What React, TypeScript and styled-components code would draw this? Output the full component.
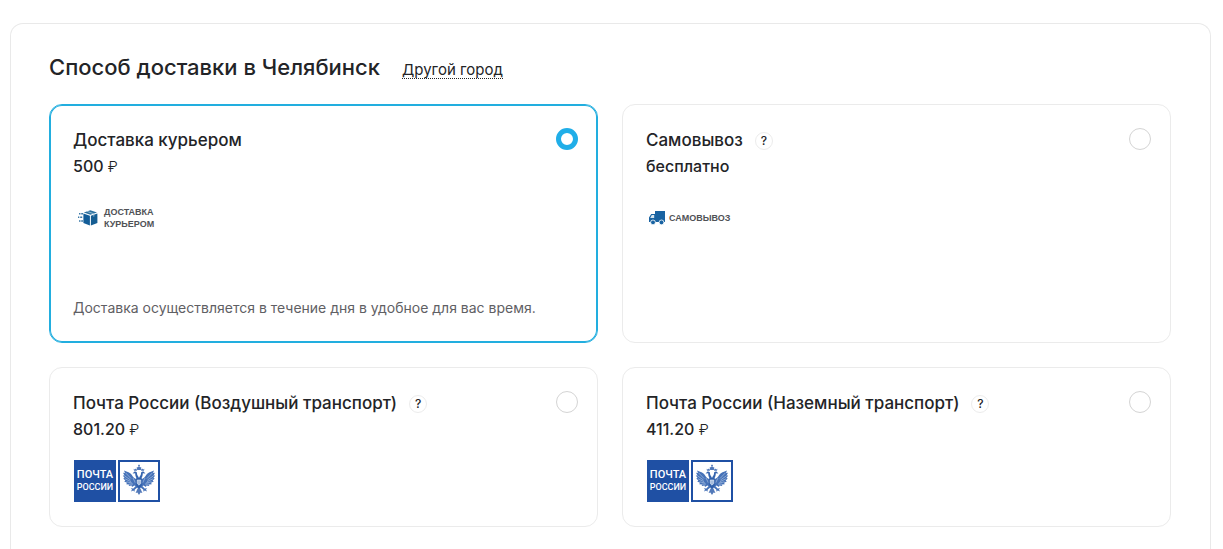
import React, { useState } from 'react';
import styled, { createGlobalStyle } from 'styled-components';

const GlobalStyle = createGlobalStyle`
  *, *::before, *::after { box-sizing: border-box; }
  body {
    margin: 0;
    background: #fff;
    color: #232427;
    font-family: Inter, 'Noto Sans', 'Liberation Sans', sans-serif;
  }
`;

const Page = styled.main`
  display: flex;
  flex-direction: column;
  min-height: 100vh;
  padding: 23px 12px 0 10px;
`;

const Panel = styled.section`
  flex: 1;
  padding: 29px 39px 20px 38px;
  border: 1px solid #e9e9e9;
  border-bottom: 0;
  border-radius: 13px 13px 0 0;
`;

const Header = styled.header`
  display: flex;
  align-items: baseline;
  gap: 22px;
  margin-bottom: 23px;
`;

const Title = styled.h2`
  margin: 0;
  font-size: 22px;
  line-height: 28px;
  font-weight: 500;
`;

const CityLink = styled.a`
  border-bottom: 1px dotted #232427;
  color: inherit;
  font-size: 15px;
  line-height: 16px;
  text-decoration: none;
`;

const Options = styled.div`
  display: grid;
  grid-template-columns: repeat(2, minmax(0, 1fr));
  gap: 24px;
`;

const Card = styled.article<{ $selected: boolean }>`
  padding: 22px 19px 24px 23px;
  border: 1px solid ${p => (p.$selected ? '#22aedf' : '#ebebeb')};
  border-radius: 13px;
  box-shadow: ${p => (p.$selected ? 'inset 0 0 0 1px #22aedf' : 'none')};
`;

const CardHead = styled.div`
  display: flex;
  align-items: flex-start;
  justify-content: space-between;
`;

const NameRow = styled.div`
  display: flex;
  align-items: center;
  gap: 12px;
`;

const Name = styled.label`
  font-size: 17px;
  line-height: 26px;
  font-weight: 500;
  cursor: pointer;
`;

const Hint = styled.button`
  width: 18px;
  height: 18px;
  margin-top: 2px;
  padding: 0;
  border: 1px solid #ececec;
  border-radius: 50%;
  background: #fff;
  color: #232427;
  font: 500 12px/16px Inter, sans-serif;
  cursor: pointer;
`;

const Price = styled.div`
  font-size: 16px;
  line-height: 26px;
  font-weight: 500;
`;

const Currency = styled.span`
  font-size: 15px;
  line-height: 16px;
  font-weight: 300;
`;

const Radio = styled.input`
  appearance: none;
  flex: none;
  width: 22px;
  height: 22px;
  margin: 1px 0 0;
  border: 1px solid #d4d4d4;
  border-radius: 50%;
  background: #fff;
  cursor: pointer;
  &:checked { border: 5px solid #20aee8; }
`;

const LogoBox = styled.div`
  display: flex;
  align-items: center;
  height: 42px;
  margin-top: 18px;
`;

const ServiceLogo = styled.div<{ $gap: number }>`
  display: flex;
  align-items: center;
  gap: ${p => p.$gap}px;
  padding-left: 3px;
  color: #505256;
  font: 700 9px/12px 'Liberation Sans', sans-serif;
`;

const PostLogo = styled.div`
  display: flex;
  gap: 2px;
  padding-left: 1px;
`;

const PostName = styled.div`
  display: flex;
  flex-direction: column;
  align-items: center;
  justify-content: center;
  width: 42px;
  height: 42px;
  background: #1f50a4;
  color: #fff;
  font: 500 11px/12px Roboto, 'Liberation Sans', sans-serif;
`;

const PostCountry = styled.span`
  font-size: 9px;
`;

const Description = styled.p`
  margin: 58px 0 0;
  color: #5f6064;
  font-size: 14px;
  line-height: 21px;
`;

const BoxIcon = () => (
  <svg width="22" height="18" viewBox="0 0 22 18" aria-hidden="true">
    <path d="M3 4.7h1.5M5.2 4.7H7M2 8.3h1.3M4.2 8.3h2M3 12h1.5M5.2 12H7" stroke="#3978a8" strokeWidth="1.4" />
    <path d="M7.8 3.6 14.4 1.2 21 3.6l-6.6 2.2z" fill="#2d719f" />
    <path d="M7.4 4.6 13.9 6.8V16.6L7.4 14z" fill="#125d98" />
    <path d="M21.4 4.6 14.9 6.8V16.6l6.5-2.6z" fill="#155d92" />
    <path d="m10.8 2.3 7 2.5v2.8" stroke="#a8c9de" strokeWidth=".8" fill="none" />
  </svg>
);

const TruckIcon = () => (
  <svg width="16" height="16" viewBox="0 0 16 16" aria-hidden="true">
    <path d="M6 1h10v11H0V7.5L2.2 4H6z" fill="#1963a2" />
    <path d="M2.8 5h2.4v3H1.2z" fill="#d6e6f1" />
    <circle cx="4" cy="12.4" r="2.4" fill="#1963a2" stroke="#fff" strokeWidth=".8" />
    <circle cx="12.5" cy="12.4" r="2.4" fill="#1963a2" stroke="#fff" strokeWidth=".8" />
  </svg>
);

const Wing = () => (
  <g>
    <path
      d="M18.5 19.5C15.5 19 14 17 12.5 14.5 11 12.3 8.5 12 5 10.5L6 13 4 12.8 5.5 15.4 3.8 15.6 5.6 18 4.2 18.6 6.4 20.6 5.2 21.6 8 22.8 7.2 24.2 10 24.4 9.8 26 12.6 25.4 13 27 15.4 25.6 18.5 27z"
      fill="#4672b8"
    />
    <path
      d="M6.5 12.8 12 18.5M5.5 15.8 11.5 20M6 18.8 12 21.6M7.5 21.8 13 23M10 24.2 14 24M14 18 16.5 23"
      stroke="#b9cce8"
      strokeWidth=".6"
      fill="none"
    />
    <path d="M20 18c-.6-2-2-2.6-2-4.6 0-1.6-1.4-2.4-2.8-1.6L13.6 13.4l2.6-.2c0 2.4.6 4.2 2.3 6.2z" fill="#3564ae" />
    <path d="M17.6 25 14.4 28.4 11.8 28.2 13 29.6 12 31.4 14.2 30.6 15.4 31.8 15.8 29.6 19 27z" fill="#4672b8" />
    <path d="m15 10.8-.4-2 1.2.6.8-1 .6 1 1-.4-.4 1.8z" fill="#5279b9" />
  </g>
);

const EagleIcon = () => (
  <svg width="42" height="42" viewBox="0 0 42 42" aria-hidden="true">
    <rect x="1" y="1" width="40" height="40" fill="#fff" stroke="#1f50a4" strokeWidth="2" />
    <g transform="translate(1 0)">
      <Wing />
      <g transform="matrix(-1 0 0 1 40 0)"><Wing /></g>
      <path d="M18.2 10 17.6 7.6 20 6.8 22.4 7.6 21.8 10z" fill="#5279b9" />
      <path d="M20 4.6V7M19 5.6h2" stroke="#4670b4" strokeWidth=".8" />
      <path d="M17.4 18h5.2l.8 4.5-1.4 4.5-2 3-2-3-1.4-4.5z" fill="#2f5faa" />
      <path d="M18.2 20h3.6v3.4L20 25.2l-1.8-1.8z" fill="#a8bfdf" stroke="#fff" strokeWidth=".5" />
      <path d="M18.6 28.5 16.6 33l1.8-.4L20 35l1.6-2.4 1.8.4-2-4.5z" fill="#5279b9" />
    </g>
  </svg>
);

const RussianPost = () => (
  <PostLogo>
    <PostName><span>ПОЧТА</span><PostCountry>РОССИИ</PostCountry></PostName>
    <EagleIcon />
  </PostLogo>
);

interface Option {
  id: string;
  name: string;
  price: string;
  paid: boolean;
  hint: boolean;
  logo: React.ReactNode;
  description?: string;
}

const options: Option[] = [
  {
    id: 'courier', name: 'Доставка курьером', price: '500', paid: true, hint: false,
    logo: <ServiceLogo $gap={6}><BoxIcon /><span>ДОСТАВКА<br />КУРЬЕРОМ</span></ServiceLogo>,
    description: 'Доставка осуществляется в течение дня в удобное для вас время.',
  },
  {
    id: 'pickup', name: 'Самовывоз', price: 'бесплатно', paid: false, hint: true,
    logo: <ServiceLogo $gap={4}><TruckIcon /><span>САМОВЫВОЗ</span></ServiceLogo>,
  },
  { id: 'air', name: 'Почта России (Воздушный транспорт)', price: '801.20', paid: true, hint: true, logo: <RussianPost /> },
  { id: 'ground', name: 'Почта России (Наземный транспорт)', price: '411.20', paid: true, hint: true, logo: <RussianPost /> },
];

export default function App() {
  const [selected, setSelected] = useState('courier');
  return (
    <>
      <GlobalStyle />
      <Page>
        <Panel>
          <Header>
            <Title>Способ доставки в Челябинск</Title>
            <CityLink href="#city">Другой город</CityLink>
          </Header>
          <Options>
            {options.map(o => (
              <Card key={o.id} $selected={selected === o.id}>
                <CardHead>
                  <NameRow>
                    <Name htmlFor={o.id}>{o.name}</Name>
                    {o.hint && <Hint type="button">?</Hint>}
                  </NameRow>
                  <Radio
                    type="radio"
                    name="delivery"
                    id={o.id}
                    checked={selected === o.id}
                    onChange={() => setSelected(o.id)}
                  />
                </CardHead>
                <Price>{o.price}{o.paid && <Currency> ₽</Currency>}</Price>
                <LogoBox>{o.logo}</LogoBox>
                {o.description && <Description>{o.description}</Description>}
              </Card>
            ))}
          </Options>
        </Panel>
      </Page>
    </>
  );
}
